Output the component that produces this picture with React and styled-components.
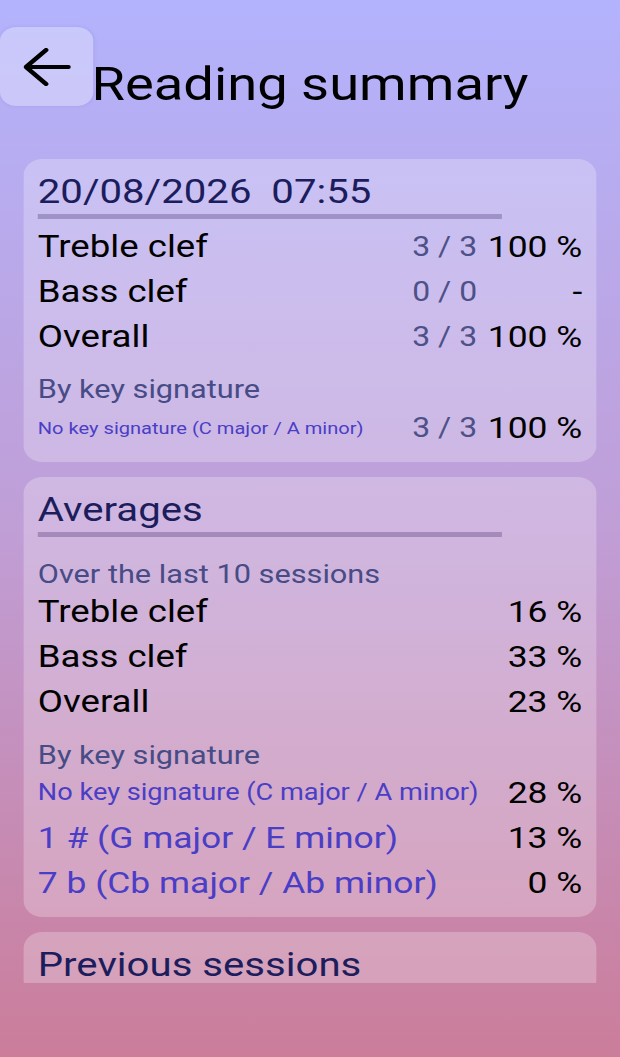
import React from 'react';
import styled, { createGlobalStyle } from 'styled-components';

const GlobalStyle = createGlobalStyle`
  html, body {
    margin: 0;
    padding: 0;
    background: #b3b3fd;
  }
  body {
    font-family: Roboto, "Noto Sans", sans-serif;
  }
`;

// The app is laid out on a 525px wide screen and shown stretched to 620px,
// so the whole page is scaled on the x axis only.
const Page = styled.div`
  width: 525px;
  height: 1057px;
  overflow: hidden;
  transform: scaleX(1.18095);
  transform-origin: left top;
  background: linear-gradient(180deg, #b3b3fd 0%, #c09ed6 50%, #cb7d9a 100%);
`;

const Header = styled.header`
  position: relative;
  height: 150px;
  display: flex;
  justify-content: center;
`;

const BackButton = styled.button`
  position: absolute;
  left: 0;
  top: 27px;
  width: 79px;
  height: 79px;
  border: none;
  border-radius: 14px;
  background: rgba(255, 255, 255, 0.3);
  box-shadow: 0 0 3px rgba(120, 110, 200, 0.25);
  display: flex;
  align-items: center;
  justify-content: center;
  padding: 0;
  cursor: pointer;
`;

const Title = styled.h1`
  margin: 0;
  padding-top: 56px;
  font-size: 46px;
  font-weight: 400;
  line-height: 56px;
  color: #000;
`;

const Scroll = styled.main`
  height: 824px;
  margin-top: 9px;
  padding: 0 20px;
  overflow: hidden;
  display: flex;
  flex-direction: column;
  gap: 15px;
`;

const Card = styled.section`
  flex-shrink: 0;
  background: rgba(255, 255, 255, 0.25);
  border-radius: 16px;
  padding: 12px 12px 12px 12px;
`;

const CardTitle = styled.h2`
  margin: 0;
  font-size: 34px;
  font-weight: 400;
  line-height: 40px;
  color: #1c1d5c;
`;

const Rule = styled.div`
  width: 393px;
  height: 5px;
  margin: 3px 0 5px;
  background: rgba(50, 30, 90, 0.28);
`;

const Row = styled.div`
  display: flex;
  align-items: center;
  height: 45px;
`;

const Label = styled.span`
  flex: 1;
  font-size: ${p => p.$size || 31}px;
  color: ${p => (p.$key ? '#4a3ec6' : '#000')};
  white-space: nowrap;
`;

const Fraction = styled.span`
  font-size: 27px;
  color: #4d5188;
  margin-right: 9px;
`;

const Value = styled.span`
  min-width: ${p => (p.$wide ? '80px' : '0')};
  text-align: right;
  font-size: 30px;
  color: #000;
`;

const SubHeading = styled.div`
  font-size: 26px;
  line-height: 30px;
  color: #474b86;
  margin: ${p => p.$m || '0'};
`;

const Arrow = () => (
  <svg width="40" height="38" viewBox="0 0 40 38" fill="none" stroke="#000" strokeWidth="4" strokeLinecap="round" strokeLinejoin="round">
    <path d="M38 19H2M19 2L2 19L19 36" />
  </svg>
);

const summary = [
  { label: 'Treble clef', frac: '3 / 3', value: '100 %' },
  { label: 'Bass clef', frac: '0 / 0', value: '-' },
  { label: 'Overall', frac: '3 / 3', value: '100 %' },
];

const averages = [
  { label: 'Treble clef', value: '16 %' },
  { label: 'Bass clef', value: '33 %' },
  { label: 'Overall', value: '23 %' },
];

const keyAverages = [
  { label: 'No key signature (C major / A minor)', size: 23, value: '28 %' },
  { label: '1 # (G major / E minor)', size: 30, value: '13 %' },
  { label: '7 b (Cb major / Ab minor)', size: 30, value: '0 %' },
];

export default function App() {
  return (
    <Page>
      <GlobalStyle />
      <Header>
        <BackButton aria-label="Back">
          <Arrow />
        </BackButton>
        <Title>Reading summary</Title>
      </Header>
      <Scroll>
        <Card>
          <CardTitle>20/08/2026&nbsp;&nbsp;07:55</CardTitle>
          <Rule />
          {summary.map(r => (
            <Row key={r.label}>
              <Label>{r.label}</Label>
              <Fraction>{r.frac}</Fraction>
              <Value $wide>{r.value}</Value>
            </Row>
          ))}
          <SubHeading $m="15px 0 1px">By key signature</SubHeading>
          <Row>
            <Label $key $size={17}>No key signature (C major / A minor)</Label>
            <Fraction>3 / 3</Fraction>
            <Value $wide>100 %</Value>
          </Row>
        </Card>
        <Card>
          <CardTitle>Averages</CardTitle>
          <Rule />
          <SubHeading $m="22px 0 0">Over the last 10 sessions</SubHeading>
          {averages.map(r => (
            <Row key={r.label}>
              <Label>{r.label}</Label>
              <Value>{r.value}</Value>
            </Row>
          ))}
          <SubHeading $m="16px 0 0">By key signature</SubHeading>
          {keyAverages.map(r => (
            <Row key={r.label}>
              <Label $key $size={r.size}>{r.label}</Label>
              <Value>{r.value}</Value>
            </Row>
          ))}
        </Card>
        <Card>
          <CardTitle>Previous sessions</CardTitle>
        </Card>
      </Scroll>
    </Page>
  );
}
